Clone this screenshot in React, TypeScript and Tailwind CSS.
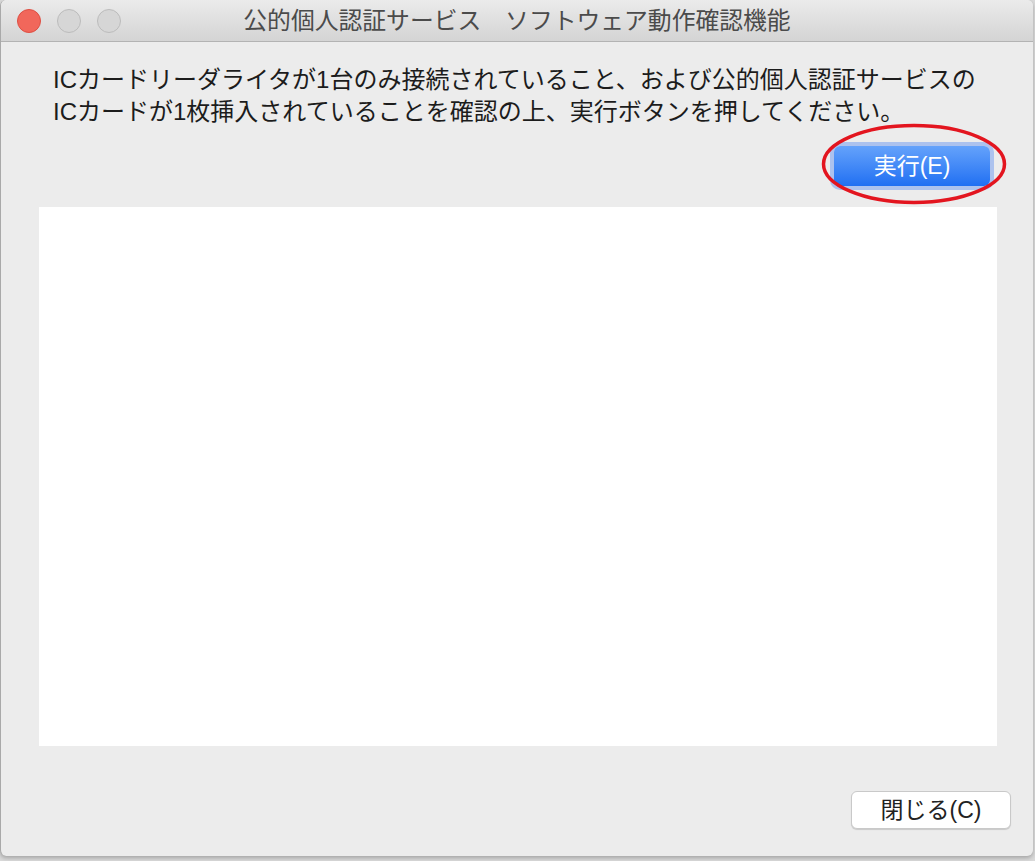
import React from 'react';

const jp = { fontFamily: '"Liberation Sans", "Noto Sans CJK JP", sans-serif' };

const TrafficLight: React.FC<{ color: string; border: string }> = ({ color, border }) => (
    <div className={`w-[24px] h-[24px] rounded-full border ${color} ${border}`} />
);

export default function App() {
    return (
        <div className="w-[1035px] h-[861px] bg-[#dadada]" style={jp}>
            <div className="w-[1033px] h-[856px] flex flex-col bg-[#ececec] rounded-[6px] overflow-hidden border-l border-[#a9a9a9] shadow-[0_2px_4px_rgba(0,0,0,0.25)]">
                <div className="relative h-[42px] shrink-0 flex items-center bg-gradient-to-b from-[#ebebeb] to-[#d4d4d4] border-b border-[#b3b3b3]">
                    <div className="flex items-center gap-[16px] pl-[16px]">
                        <TrafficLight color="bg-[#f1675b]" border="border-[#de4f43]" />
                        <TrafficLight color="bg-[#d6d6d6]" border="border-[#bcbcbc]" />
                        <TrafficLight color="bg-[#d6d6d6]" border="border-[#bcbcbc]" />
                    </div>
                    <div className="absolute inset-0 flex items-center justify-center text-[23.8px] text-[#4b4b4b] pointer-events-none">
                        公的個人認証サービス　ソフトウェア動作確認機能
                    </div>
                </div>

                <div className="flex-1 flex flex-col">
                    <p className="mt-[22px] ml-[52px] text-[24px] leading-[32px] text-[#1c1c1c]">
                        ICカードリーダライタが1台のみ接続されていること、および公的個人認証サービスの
                        <br />
                        ICカードが1枚挿入されていることを確認の上、実行ボタンを押してください。
                    </p>

                    <div className="mt-[18px] flex justify-end pr-[43px]">
                        <div className="relative">
                            <button className="w-[156px] h-[40px] rounded-[6px] bg-gradient-to-b from-[#64a2fb] to-[#1f6ff2] text-white text-[23px] leading-none shadow-[0_0_0_4px_rgba(120,160,240,0.55)]">
                                実行(E)
                            </button>
                            <svg className="absolute left-[-13px] top-[-23px] pointer-events-none" width="186" height="82" viewBox="0 0 186 82">
                                <ellipse cx="93" cy="41" rx="90.5" ry="38.5" fill="none" stroke="#e3151f" strokeWidth="3.5" />
                            </svg>
                        </div>
                    </div>

                    <div className="mt-[21px] ml-[38px] w-[958px] h-[539px] bg-white" />

                    <div className="mt-[45px] flex justify-end pr-[22px]">
                        <button className="w-[160px] h-[38px] rounded-[6px] bg-white border border-[#c9c9c9] shadow-[0_1px_1px_rgba(0,0,0,0.15)] text-[23px] leading-none text-[#222]">
                            閉じる(C)
                        </button>
                    </div>
                </div>
            </div>
        </div>
    );
}
